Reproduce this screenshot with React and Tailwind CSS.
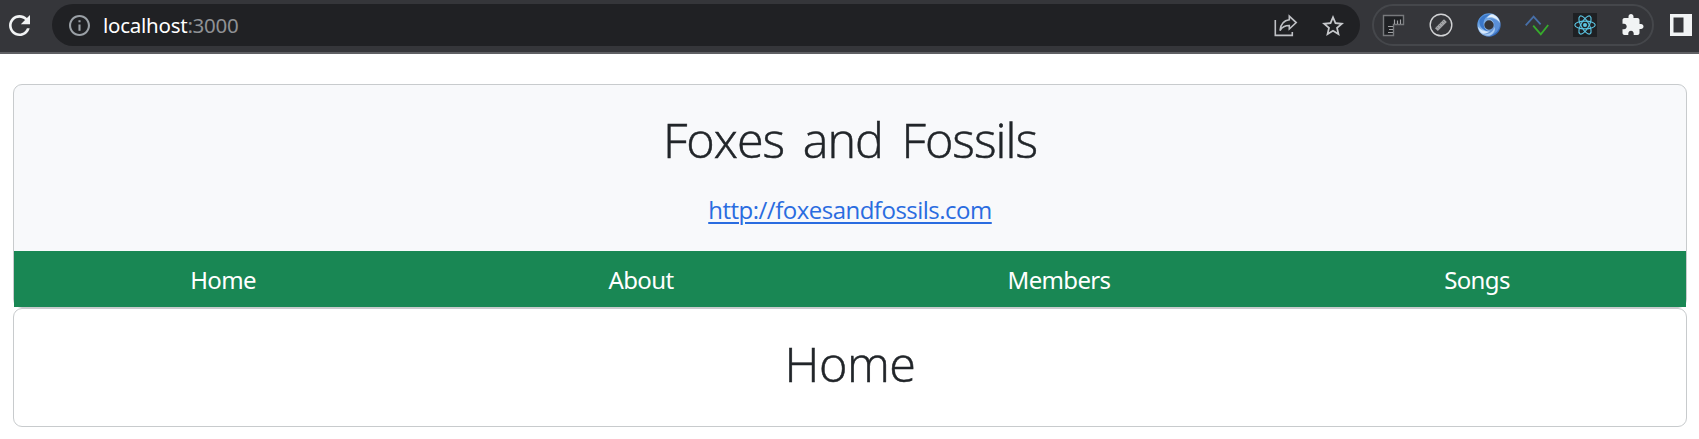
import React from "react";

const RELOAD =
  "M17.65 6.35C16.2 4.9 14.21 4 12 4c-4.42 0-7.99 3.58-7.99 8s3.57 8 7.99 8c3.73 0 6.84-2.55 7.73-6h-2.08c-.82 2.33-3.04 4-5.65 4-3.31 0-6-2.69-6-6s2.69-6 6-6c1.66 0 3.14.69 4.22 1.78L13 11h7V4z";
const INFO =
  "M11 7h2v2h-2zm0 4h2v6h-2zm1-9C6.48 2 2 6.48 2 12s4.48 10 10 10 10-4.48 10-10S17.52 2 12 2zm0 18c-4.41 0-8-3.59-8-8s3.59-8 8-8 8 3.59 8 8-3.59 8-8 8z";
const STAR =
  "M22 9.24l-7.19-.62L12 2 9.19 8.63 2 9.24l5.46 4.73L5.82 21 12 17.27 18.18 21l-1.63-7.03L22 9.24zM12 15.4l-3.76 2.27 1-4.28-3.32-2.88 4.38-.38L12 6.1l1.71 4.04 4.38.38-3.32 2.88 1 4.28L12 15.4z";
const PUZZLE =
  "M20.5 11H19V7c0-1.1-.9-2-2-2h-4V3.5C13 2.12 11.88 1 10.5 1S8 2.12 8 3.5V5H4c-1.1 0-1.99.9-1.99 2v3.8H3.5c1.49 0 2.7 1.21 2.7 2.7s-1.21 2.7-2.7 2.7H2V20c0 1.1.9 2 2 2h3.8v-1.5c0-1.49 1.21-2.7 2.7-2.7 1.49 0 2.7 1.21 2.7 2.7V22H17c1.1 0 2-.9 2-2v-4h1.5c1.38 0 2.5-1.12 2.5-2.5S21.88 11 20.5 11z";

function Share() {
  return (
    <svg className="size-6" viewBox="0 0 24 24" fill="none" stroke="#bfc1c5" strokeWidth="1.6">
      <path d="M1.3 7V22.4H18.3V19" />
      <path d="M15.3 3.2 22.2 9.6 15.3 16V12.5C10.5 12.5 8 14 6 17.5 6.7 11.5 9.4 7.4 15.3 6.8Z" />
    </svg>
  );
}

function Ruler() {
  return (
    <svg className="size-6" viewBox="0 0 24 24" fill="none">
      <path d="M2.5 2.5H22.5V11.5H12.5V22.5H2.5Z" fill="#1f2124" stroke="#77797c" strokeWidth="1.4" />
      <path d="M13.5 6.5V11M16.5 7.5V11M19.5 6.5V11M7 13.5H12M8 16.5H12M7 19.5H12" stroke="#a0a1a4" strokeWidth="1.2" />
    </svg>
  );
}

function Gauge() {
  return (
    <svg className="size-6" viewBox="0 0 24 24" fill="none">
      <circle cx="12" cy="12" r="10.8" stroke="#d2d3d5" strokeWidth="1.4" />
      <path d="M7.4 16.6 16.4 7.6" stroke="#a4a5a8" strokeWidth="4" />
      <path d="M7.2 13.4l2 2M9.4 11.4l2 2M11.4 9.4l2 2M13.4 7.4l2 2" stroke="#66686b" strokeWidth=".7" />
    </svg>
  );
}

function BlueRing() {
  return (
    <svg className="size-6" viewBox="0 0 24 24" fill="none">
      <defs>
        <linearGradient id="ring" x1="0" y1="0" x2="1" y2="1">
          <stop offset="0" stopColor="#4f8fda" />
          <stop offset=".5" stopColor="#9cc4f0" />
          <stop offset="1" stopColor="#2b62b4" />
        </linearGradient>
      </defs>
      <circle cx="12" cy="12" r="8.2" stroke="url(#ring)" strokeWidth="7" />
      <path d="M2.5 7.5C4.5 3 9 .9 14 1.2 9.5 3 7 5.5 6.6 9.5 6.2 14 8.5 17 12 18.2 6 18 1.8 13.5 2.5 7.5Z" fill="#3b78ca" />
      <path d="M1 13.5C3.5 17.5 8 19 13 18.2 11 20 8.5 20.8 5.5 20.6 3 19 1.5 16.5 1 13.5Z" fill="#d6e8fb" />
      <path d="M10 5C15 3 20.5 5.5 22.8 10 22.5 6 19 2 15 1.2 12.5 1.8 11 3.2 10 5Z" fill="#e3effc" />
      <path d="M22.8 11C22.5 17 18.5 21.5 12 22.8 16 20 18.4 16.5 17.5 12 16.9 8.8 14.5 6.2 11 5.6 16 4.6 20.8 6.5 22.8 11Z" fill="#5a90d8" />
      <path d="M7 21.4C12.5 21.5 16.5 18.5 17.3 14 19 17 17 20.5 12.5 22.8 10.5 22.9 8.5 22.4 7 21.4Z" fill="#a9cbf2" />
    </svg>
  );
}

function Zigzag() {
  return (
    <svg className="size-6" viewBox="0 0 24 24" fill="none" strokeWidth="1.8">
      <path d="M.7 12.3 8.6 3.6 15.6 11.3" stroke="#476fa8" />
      <path d="M8.2 12.6 15.8 21.3 23.2 12" stroke="#37ac2c" />
    </svg>
  );
}

function ReactBadge() {
  return (
    <svg className="size-6" viewBox="0 0 24 24" fill="none" stroke="#5bc4e2" strokeWidth="1.15">
      <path d="M0 0H24V24H0Z" fill="#1e2023" stroke="none" />
      <ellipse cx="12" cy="12" rx="10.2" ry="3.9" />
      <ellipse cx="12" cy="12" rx="10.2" ry="3.9" transform="rotate(60 12 12)" />
      <ellipse cx="12" cy="12" rx="10.2" ry="3.9" transform="rotate(120 12 12)" />
      <circle cx="12" cy="12" r="2" fill="#5bc4e2" stroke="none" />
    </svg>
  );
}

function Toolbar() {
  return (
    <header className="flex h-[54px] items-start border-b-2 border-[#5f6064] bg-[#35363a] pt-1">
      <div className="flex h-[42px] w-[52px] shrink-0 items-center pl-[9px]">
        <svg className="h-[21px] w-[21px]" viewBox="4 4 16 16" fill="#f1f3f4"><path d={RELOAD} /></svg>
      </div>
      <div className="flex h-[42px] w-[1308px] shrink-0 items-center rounded-full bg-[#202124] pr-4 pl-[17px]">
        <svg className="h-[21px] w-[21px]" viewBox="2 2 20 20" fill="#9aa0a6"><path d={INFO} /></svg>
        <span className="ml-[13px] font-['Noto_Sans'] text-[20.5px] leading-none tracking-[-0.25px] text-[#8f9195]">
          <span className="text-white">localhost</span>:3000
        </span>
        <div className="ml-auto flex items-center gap-[24px]">
          <Share />
          <svg className="h-[21px] w-[22px]" viewBox="2 2 20 19" fill="#c6c8cb"><path d={STAR} /></svg>
        </div>
      </div>
      <div className="ml-3 flex h-[42px] w-[282px] shrink-0 items-center gap-6 rounded-full border-2 border-[#45474b] pl-[7px]">
        <Ruler />
        <Gauge />
        <BlueRing />
        <Zigzag />
        <ReactBadge />
        <svg className="size-6 p-px" viewBox="1.5 1 22 22" fill="#f1f3f4"><path d={PUZZLE} /></svg>
      </div>
      <svg className="mt-[10px] ml-4 size-[22px] shrink-0" viewBox="0 0 22 22" fill="#f1f3f4">
        <path fillRule="evenodd" d="M0 0H22V22H0ZM3.5 3.5V18.5H13.5V3.5Z" />
      </svg>
    </header>
  );
}

export default function App() {
  return (
    <div className="h-[439px] overflow-hidden bg-white font-['Open_Sans','Noto_Sans',sans-serif] text-[#212529]">
      <Toolbar />
      <main className="pt-[30px] pr-3 pl-[13px]">
        <section className="flex h-[224px] flex-col rounded-[9px] border border-[#c8cbcd] bg-[#f8f9fb] text-center">
          <div className="flex h-[166px] flex-col items-center">
            <h1 className="mt-6 text-[48.5px] leading-[60px] font-light tracking-[-1px] [word-spacing:7px] [-webkit-text-stroke:0.5px_#212529]">Foxes and Fossils</h1>
            <a
              href="#"
              className="mt-[23px] text-[24px] leading-[36px] tracking-[-0.5px] text-[#2a6ce0] underline decoration-2 underline-offset-[3px]"
            >
              http://foxesandfossils.com
            </a>
          </div>
          <nav className="grid h-[56px] grid-cols-4 items-center bg-[#198754] pt-[2px] font-['Noto_Sans'] text-[24px] leading-[36px] tracking-[-0.65px] text-white">
            <a href="#">Home</a>
            <a href="#">About</a>
            <a href="#">Members</a>
            <a href="#">Songs</a>
          </nav>
        </section>
        <section className="h-[119px] rounded-[9px] border border-[#c8cbcd] bg-white pt-6 text-center">
          <h2 className="text-[48.5px] leading-[60px] font-light tracking-[-0.5px] [-webkit-text-stroke:0.5px_#212529]">Home</h2>
        </section>
      </main>
    </div>
  );
}
